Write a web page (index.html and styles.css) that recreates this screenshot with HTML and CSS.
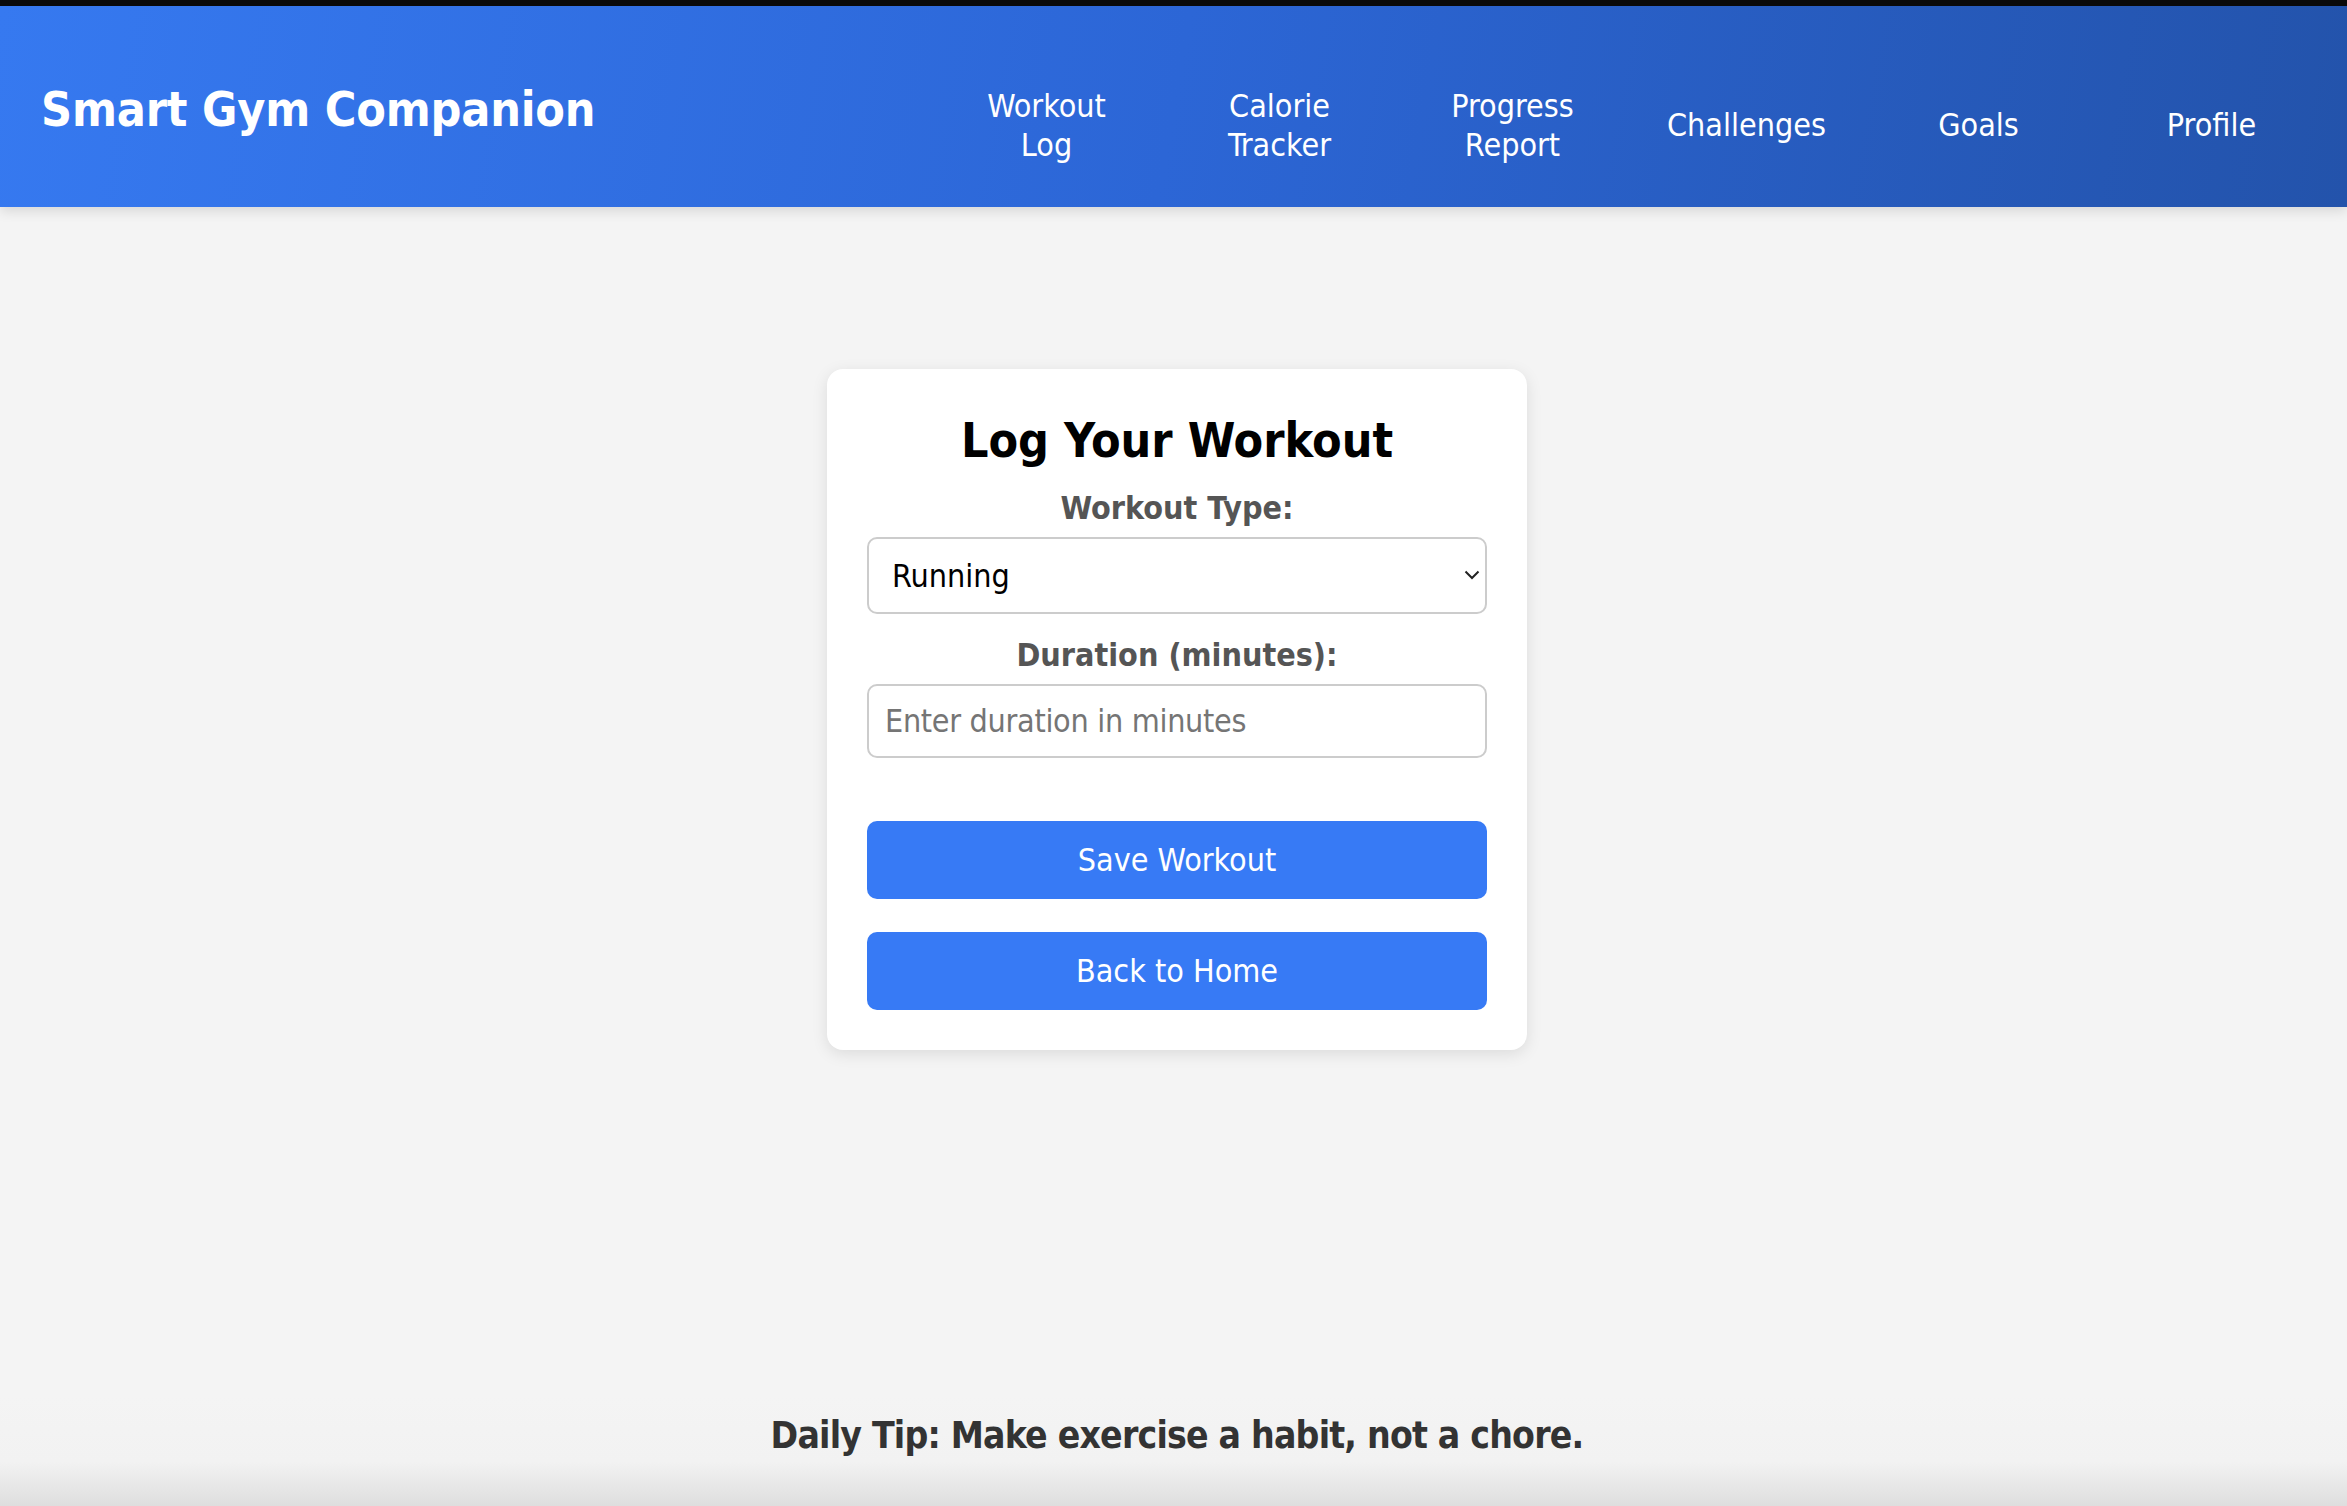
FILE: index.html
```html
<!DOCTYPE html>
<html lang="en">
<head>
<meta charset="utf-8">
<title>Smart Gym Companion - Workout Log</title>
<link rel="stylesheet" href="styles.css">
</head>
<body>
<div class="topstrip"></div>
<header class="site-header">
  <h1 class="logo">Smart Gym Companion</h1>
  <nav class="nav">
    <a class="nav-item" href="#">Workout Log</a>
    <a class="nav-item" href="#">Calorie Tracker</a>
    <a class="nav-item" href="#">Progress Report</a>
    <a class="nav-item" href="#">Challenges</a>
    <a class="nav-item" href="#">Goals</a>
    <a class="nav-item" href="#">Profile</a>
  </nav>
</header>
<main class="main">
  <section class="card">
    <h2 class="card-title">Log Your Workout</h2>
    <label class="field-label" for="type">Workout Type:</label>
    <div class="select-wrap">
      <select id="type" class="field select">
        <option>Running</option>
        <option>Cycling</option>
        <option>Swimming</option>
        <option>Weightlifting</option>
      </select>
      <svg class="chevron" width="16" height="10" viewBox="0 0 16 10"><path d="M1.5 1.5 L8 8 L14.5 1.5" fill="none" stroke="#222" stroke-width="2"/></svg>
    </div>
    <label class="field-label" for="dur">Duration (minutes):</label>
    <input id="dur" class="field input" type="number" placeholder="Enter duration in minutes">
    <button class="btn btn-save">Save Workout</button>
    <button class="btn">Back to Home</button>
  </section>
</main>
<footer class="footer">
  <p class="tip">Daily Tip: Make exercise a habit, not a chore.</p>
</footer>
</body>
</html>
```
FILE: styles.css
```css
* { box-sizing: border-box; }
html, body { margin: 0; padding: 0; }
body {
  font-family: "DejaVu Sans Condensed", "DejaVu Sans", sans-serif;
  font-stretch: condensed;
  background: #f4f4f4;
  height: 1506px;
  display: flex;
  flex-direction: column;
  overflow: hidden;
}
.topstrip { height: 6px; background: #0b0b0b; flex: none; }
.site-header {
  flex: none;
  height: 201px;
  display: flex;
  align-items: center;
  justify-content: space-between;
  padding: 0 19px 0 41px;
  background: linear-gradient(100deg, #3679f0 0%, #2c66d6 50%, #2353ab 100%);
  box-shadow: 0 4px 12px rgba(0,0,0,0.12);
  position: relative;
  z-index: 1;
}
.logo {
  margin: 6px 0 0 0;
  font-size: 48px;
  font-weight: bold;
  color: #fff;
  line-height: 1.2;
  letter-spacing: -0.2px;
}
.nav {
  display: grid;
  grid-template-columns: repeat(6, 233px);
  align-items: center;
  margin-top: 38px;
}
.nav-item {
  color: #fff;
  text-decoration: none;
  font-size: 32px;
  line-height: 39px;
  text-align: center;
  padding: 0 38px;
}
.main {
  flex: 1;
  display: flex;
  justify-content: center;
  align-items: flex-start;
  padding: 162px 0 0 7px;
}
.card {
  width: 700px;
  background: #fff;
  border-radius: 16px;
  box-shadow: 0 4px 16px rgba(0,0,0,0.1);
  padding: 40px;
  display: flex;
  flex-direction: column;
  text-align: center;
}
.card-title {
  margin: 3px 0 0 0;
  font-size: 48px;
  line-height: 57px;
  font-weight: bold;
  color: #000;
}
.field-label {
  display: block;
  font-size: 32px;
  line-height: 38px;
  font-weight: bold;
  color: #555;
  margin-top: 20px;
  margin-bottom: 10px;
}
.select-wrap { position: relative; }
.field {
  display: block;
  width: 100%;
  border: 2px solid #ccc;
  border-radius: 10px;
  background: #fff;
  font-family: inherit;
  font-stretch: condensed;
  font-size: 32px;
  color: #000;
  margin: 0;
}
.select {
  height: 77px;
  padding: 0 16px 0 23px;
  -webkit-appearance: none;
  appearance: none;
}
.chevron {
  position: absolute;
  right: 7px;
  top: 33px;
  pointer-events: none;
}
.select-wrap + .field-label { margin-top: 22px; }
.input {
  height: 74px;
  padding: 0 16px;
  letter-spacing: -0.3px;
}
.input::placeholder { color: #757575; }
.btn {
  display: block;
  width: 100%;
  height: 78px;
  border: none;
  border-radius: 10px;
  background: #377af5;
  color: #fff;
  font-family: inherit;
  font-stretch: condensed;
  font-size: 32px;
  margin-top: 33px;
  cursor: pointer;
}
.btn-save { margin-top: 63px; }
.footer {
  flex: none;
  height: 110px;
  padding-left: 7px;
  background: linear-gradient(to bottom, #f4f4f4 0%, #f2f2f2 60%, #dedede 100%);
}
.tip {
  margin: 0;
  padding-top: 18px;
  text-align: center;
  font-size: 37px;
  line-height: 44px;
  font-weight: bold;
  color: #333;
  letter-spacing: -0.8px;
}
```
